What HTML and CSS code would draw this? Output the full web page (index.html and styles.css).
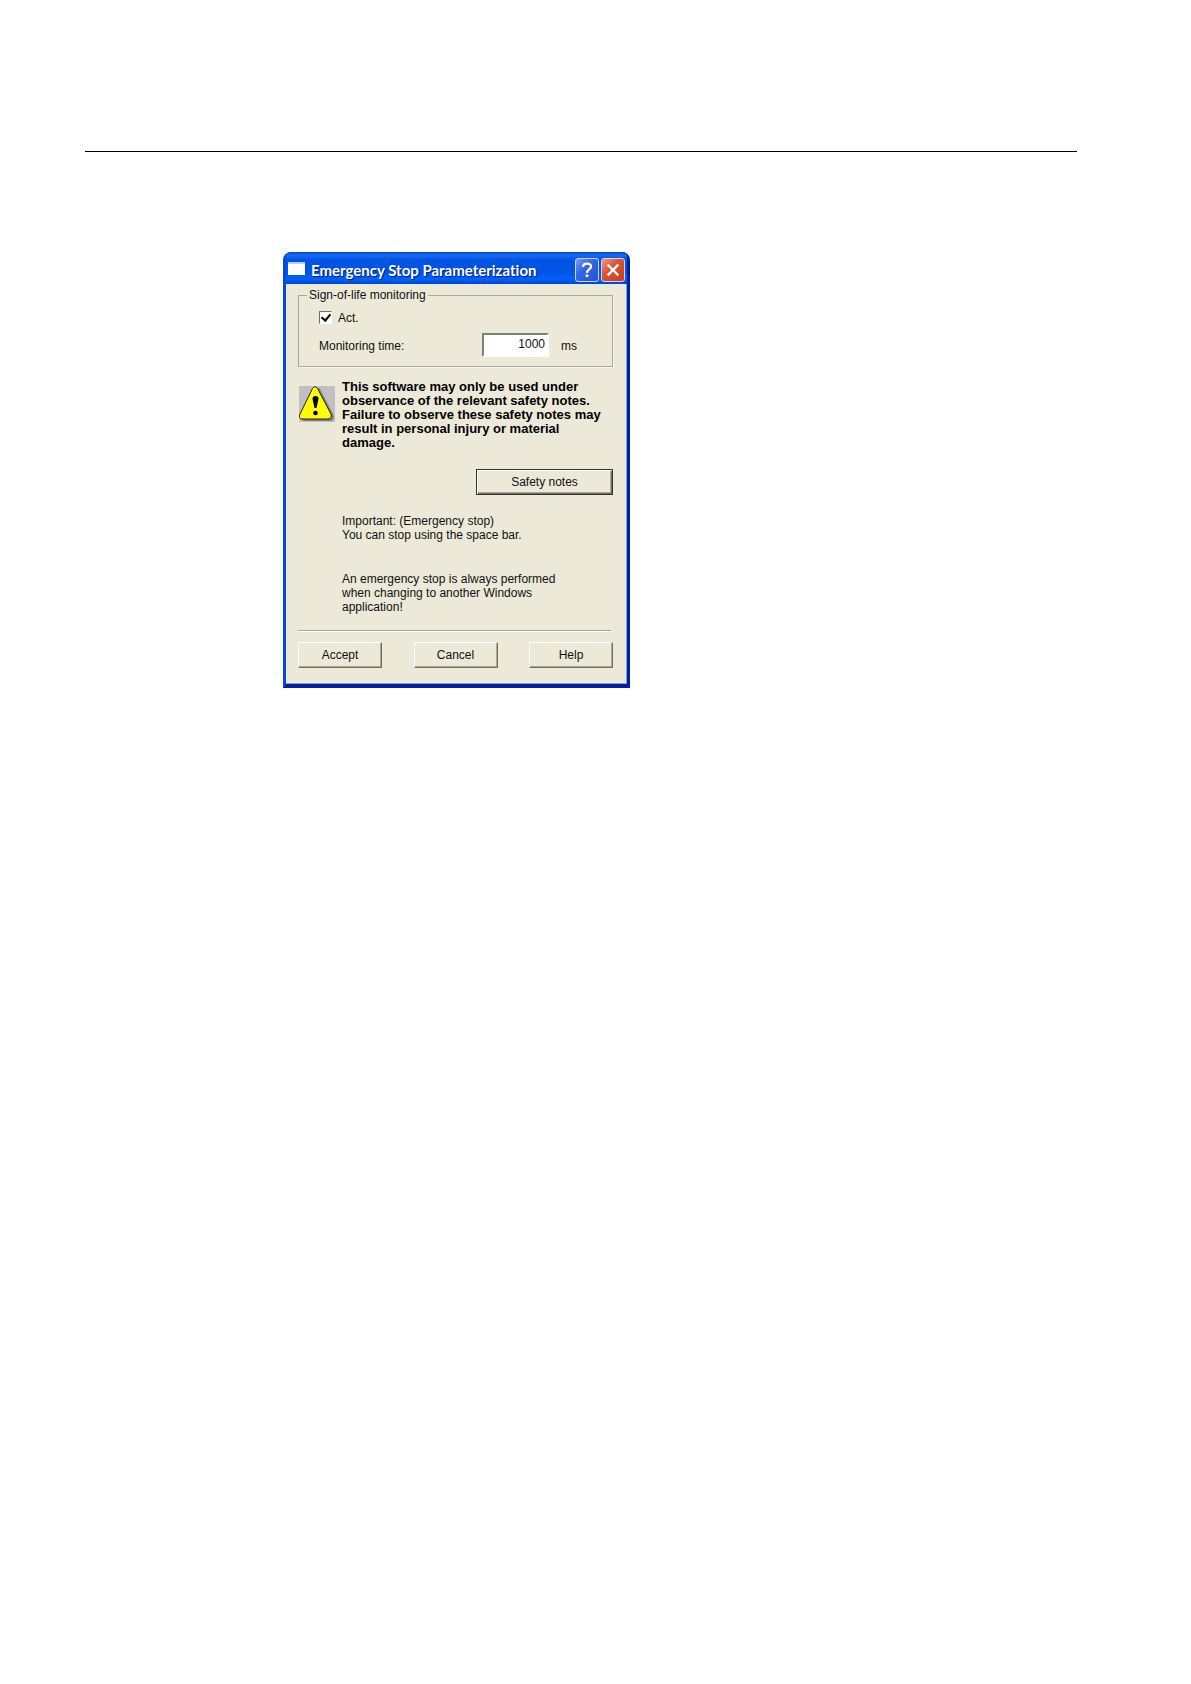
FILE: index.html
```html
<!DOCTYPE html>
<html lang="en">
<head>
  <meta charset="UTF-8">
  <meta name="viewport" content="width=device-width, initial-scale=1.0">
  <title>Emergency Stop Parameterization</title>
  <link rel="stylesheet" href="styles.css">
</head>
<body>
  <main class="page">
    <hr class="page-rule">

    <form class="dialog">
      <!-- Title bar -->
      <header class="title-bar">
        <span class="window-icon"></span>
        <h1>Emergency Stop Parameterization</h1>
        <button type="button" class="title-button" aria-label="Context help">
          <svg width="22" height="22" viewBox="0 0 22 22">
            <path d="M7 8C7 3.500 15 3.500 15 7.500C15 10.500 11 10.500 11 14" fill="none" stroke="#fff" stroke-width="2.200"/>
            <rect x="9.700" y="15.500" width="2.600" height="2.600" fill="#fff"/>
          </svg>
        </button>
        <button type="button" class="title-button close" aria-label="Close">
          <svg width="22" height="22" viewBox="0 0 22 22">
            <path d="M6.500 6.500L15.500 15.500M15.500 6.500L6.500 15.500" stroke="#fff" stroke-width="2.400" stroke-linecap="square"/>
          </svg>
        </button>
      </header>

      <div class="dialog-body">
        <fieldset class="group">
          <legend>Sign-of-life monitoring</legend>
          <label class="check-row">
            <input type="checkbox" class="check" checked>
            Act.
          </label>
          <div class="time-row">
            <label for="time">Monitoring time:</label>
            <input type="text" id="time" class="time-input" value="1000">
            <span>ms</span>
          </div>
        </fieldset>

        <!-- Safety warning -->
        <div class="warning">
          <svg class="warning-icon" width="36" height="36" viewBox="0 0 36 36">
            <rect width="36" height="36" fill="#c0c0c0"/>
            <path d="M18 2Q20 1 21.500 4L34.500 29Q36 33 32.500 35H6Q3 35 2 32Z" fill="#808080"/>
            <path d="M13.500 2.500Q16 -1 18.500 2.500L32 28Q33.500 32.500 29 33H3Q-1 32.500 1 28Z" fill="#ff0" stroke="#222" stroke-width="1"/>
            <path d="M13.500 13Q13.500 10 16.500 10Q19.500 10 19.500 13L17.500 22H15.500Z" fill="#000"/>
            <circle cx="16.500" cy="27" r="2.300" fill="#000"/>
          </svg>
          <p>
            This software may only be used under<br>
            observance of the relevant safety notes.<br>
            Failure to observe these safety notes may<br>
            result in personal injury or material<br>
            damage.
          </p>
        </div>

        <button type="button" class="button default">Safety notes</button>

        <!-- Notes -->
        <div class="notes">
          <p>
            Important: (Emergency stop)<br>
            You can stop using the space bar.
          </p>
          <p>
            An emergency stop is always performed<br>
            when changing to another Windows<br>
            application!
          </p>
        </div>

        <hr class="separator">

        <div class="actions">
          <button type="button" class="button">Accept</button>
          <button type="button" class="button">Cancel</button>
          <button type="button" class="button">Help</button>
        </div>
      </div>
    </form>
  </main>
</body>
</html>
```
FILE: styles.css
```css
* {
  margin: 0;
  padding: 0;
  box-sizing: border-box;
}

body {
  background: #fff;
  color: #111;
  font-family: "Liberation Sans", Arial, sans-serif;
  font-size: 12px;
  line-height: 14px;
}

.page {
  padding: 151px 114px 40px 85px;
}

.page-rule {
  border: 0;
  border-top: 1px solid #000;
}

/* Dialog window */
.dialog {
  width: 347px;
  margin: 100px 0 0 198px;
  border: solid;
  border-width: 0 3px 4px;
  border-color: #0831d9 #001ea0 #001ea0 #0a46e0;
  border-radius: 8px 8px 0 0;
  background: #0054e3;
}

.title-bar {
  display: flex;
  align-items: center;
  gap: 2px;
  height: 32px;
  padding: 3px 2px 0;
  border-radius: 5px 5px 0 0;
  background: linear-gradient(#0842c4, #1a6cf4 3px, #0054e3 8px, #0054e3 20px, #0062fa 27px, #0046cc);
}

.title-bar h1 {
  flex: 1;
  padding-left: 4px;
  color: #fff;
  font-family: Lato, "Open Sans", sans-serif;
  font-size: 15px;
  font-variant-ligatures: none;
  line-height: 18px;
  text-shadow: 1px 1px 1px #0a1883;
  white-space: nowrap;
}

.window-icon {
  width: 17px;
  height: 13px;
  margin-bottom: 3px;
  border-top: 2px solid #b8d0f8;
  background: #fff;
}

.title-button {
  width: 24px;
  height: 24px;
  border: 1px solid #c8d8fa;
  border-radius: 3px;
  background: linear-gradient(135deg, #7b9df5, #3566e4 40%, #2352d8);
}

.title-button.close {
  background: linear-gradient(135deg, #f09a80, #dc5433 40%, #c63d18);
}

.title-button svg {
  display: block;
}

.dialog-body {
  display: flex;
  flex-direction: column;
  padding: 4px 14px 16px 12px;
  background: #ece9d8;
  box-shadow: inset -1px -1px 0 #7d9ff0;
}

/* Monitoring group */
.group {
  padding: 8px 20px 9px;
  border: 1px solid #aca899;
  box-shadow: 1px 1px 0 #fff8;
}

.group legend {
  margin-left: -12px;
  padding: 0 2px;
}

.check-row {
  display: flex;
  align-items: center;
  gap: 6px;
  height: 15px;
  margin-bottom: 8px;
}

.check {
  appearance: none;
  width: 13px;
  height: 13px;
  border: 1px solid;
  border-color: #716f64 #fff #fff #716f64;
  background: #fff;
}

.check:checked::before {
  content: "";
  display: block;
  width: 4px;
  height: 7px;
  margin: 0 0 0 3px;
  border: solid #000;
  border-width: 0 2px 2px 0;
  transform: rotate(40deg);
}

.time-row {
  display: flex;
  align-items: center;
  gap: 12px;
}

.time-row label {
  flex: 1;
  padding-top: 2px;
}

.time-row span {
  width: 31px;
  padding-top: 2px;
}

.time-input {
  width: 67px;
  height: 24px;
  padding: 0 2px 3px;
  border: 2px solid;
  border-color: #808075 #fff #fff #808075;
  background: #fff;
  color: #111;
  font: inherit;
  text-align: right;
}

/* Warning */
.warning {
  display: flex;
  gap: 7px;
  margin: 13px 0 19px 1px;
  color: #000;
  font-size: 13px;
  font-weight: bold;
  white-space: nowrap;
}

.warning-icon {
  flex: none;
  margin-top: 6px;
}

/* Buttons */
.button {
  width: 84px;
  height: 26px;
  border: 1px solid;
  border-color: #fff #716f64 #716f64 #fff;
  box-shadow: inset -1px -1px 0 #aca899;
  background: #ece9d8;
  color: #111;
  font: inherit;
}

.button.default {
  align-self: flex-end;
  width: 137px;
  border-color: #333328;
  box-shadow: inset 1px 1px 0 #fff, inset -1px -1px 0 #716f64, inset -2px -2px 0 #aca899;
}

/* Notes */
.notes {
  display: flex;
  flex-direction: column;
  gap: 30px;
  margin: 19px 0 16px 44px;
}

.separator {
  margin-right: 2px;
  border: 0;
  border-top: 1px solid #aca899;
  border-bottom: 1px solid #fff;
}

.actions {
  display: flex;
  justify-content: space-between;
  margin-top: 10px;
}
```
